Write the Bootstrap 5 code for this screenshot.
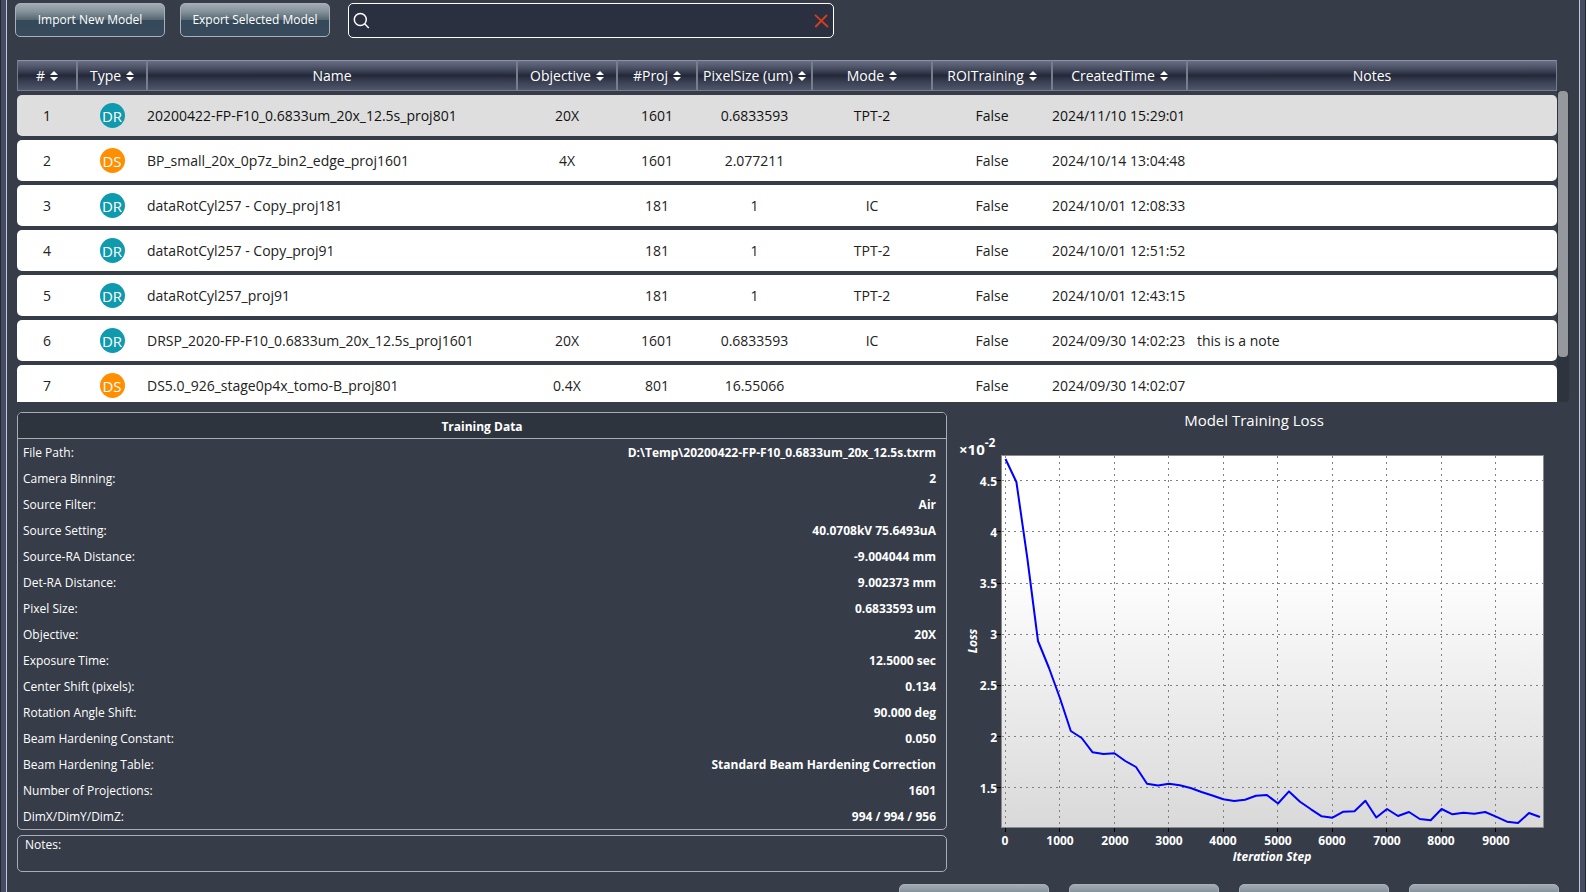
<!DOCTYPE html>
<html lang="en">
<head>
<meta charset="utf-8">
<meta name="viewport" content="width=device-width, initial-scale=1">
<title>Model Manager</title>
<link href="https://cdn.jsdelivr.net/npm/bootstrap@5.3.0/dist/css/bootstrap.min.css" rel="stylesheet">
<style>
  :root { --panel: #363c48; --line: #a9adb8; --dark: #2e343e; }
  body {
    background: #454b60; color: #fff; height: 100vh; overflow: hidden;
    border: solid #26282f; border-width: 0 1px;
    font-family: "Open Sans", "Noto Sans", sans-serif; font-size: 14px;
  }
  .dialog-panel { background: var(--panel); border: solid #c3c7d3; border-width: 0 1px; margin: 0 5px; padding: 3px 10px 0; min-height: 100vh; }

  .btn-glass {
    width: 150px; height: 34px; padding: 0; border: 1px solid #a7b0ba; border-radius: 5px; color: #fff; font-size: 12px;
    background: linear-gradient(#a3abb3 0, #82909a 25%, #55666f 50%, #34495a 51%, #384b5c 100%);
  }
  .btn-glass:hover { color: #fff; border-color: #fff; }
  .toolbar { margin-left: -2px; gap: 15px; }
  .search-field { width: 486px; height: 35px; margin-left: 3px; background: #2b3040; border: 1px solid #fff; border-radius: 5px; padding: 0 4px; }
  .search-field input { background: transparent; border: 0; outline: 0; color: #fff; min-width: 0; }

  .table-area { height: 346px; margin-top: 18px; }
  .table-clip { overflow: hidden; }
  .model-table { width: 100%; table-layout: fixed; border-collapse: separate; border-spacing: 0 4px; white-space: nowrap; }
  .model-table th {
    height: 31px; padding: 0; font-weight: 400; text-align: center; line-height: 20px;
    border: solid #777d8c; border-width: 1px; border-top-color: #8d92a2;
    background: linear-gradient(#696e82 0, #4a5063 25%, #24293a 50%, #3a4053 72%, #50576b 100%);
  }
  .model-table th svg { display: inline-block; margin: 0 0 2px 5px; }
  .model-table td { height: 41px; padding: 0; background: #fff; color: #222; text-align: center; line-height: 20px; }
  .model-table td:first-child { border-radius: 5px 0 0 5px; }
  .model-table td:last-child { border-radius: 0 5px 5px 0; padding-left: 10px; }
  .model-table td:nth-child(3), .model-table td:nth-child(9), .model-table td:last-child { text-align: left; }
  .model-table .selected td { background: #dedede; color: #111; }
  .c-num { width: 60px; } .c-type { width: 70px; } .c-obj { width: 100px; } .c-proj { width: 80px; }
  .c-pix { width: 115px; } .c-mode { width: 120px; } .c-time { width: 135px; }
  .kind { display: inline-flex; align-items: center; justify-content: center; width: 25px; height: 25px; border-radius: 50%; color: #fff; background: #109aad; vertical-align: middle; font-size: 15px; }
  .kind-ds { background: #ff8f00; }
  .scroll-track { width: 12px; margin-top: 35px; padding: 0 1px; background: var(--dark); border-radius: 0 0 4px 4px; }
  .scroll-thumb { height: 266px; background: #95989d; border-radius: 4px; }

  .lower { display: grid; grid-template-columns: minmax(0, 1fr) 622px; margin-top: 10px; }
  .data-box { border: 1px solid var(--line); border-radius: 5px; font-size: 12px; line-height: 28px; }
  .data-box h2 { font-size: 12px; font-weight: 700; line-height: 28px; height: 26px; background: var(--dark); border-bottom: 1px solid var(--line); border-radius: 4px 4px 0 0; }
  .data-box dl { padding: 0 10px 0 5px; }
  .data-box dl div { height: 26px; }
  .data-box dt { font-weight: 400; }
  .data-box dd { font-weight: 700; }
  .note-box { height: 37px; margin-top: 5px; padding: 0 7px; line-height: 17px; }
  .chart-title { font-size: 15px; font-weight: 400; line-height: 16px; margin-bottom: 6px; }
  .loss-chart { display: block; width: 100%; font-size: 12px; font-weight: 700; }
  .footer-bar { gap: 20px; padding: 12px 10px 0 0; }
</style>
</head>
<body>
<svg class="d-none">
  <symbol id="sort" viewBox="0 0 8 10"><path d="M4 0 8 4H0zM4 10 0 6h8z" fill="#fff"/></symbol>
</svg>
<main class="dialog-panel">
  <div class="toolbar d-flex align-items-start">
    <button type="button" class="btn btn-glass flex-shrink-0">Import New Model</button>
    <button type="button" class="btn btn-glass flex-shrink-0">Export Selected Model</button>
    <div class="search-field d-flex align-items-center">
      <svg width="17" height="17" viewBox="0 0 17 17" fill="none" stroke="#fff" stroke-width="1.5"><circle cx="7.3" cy="7.5" r="6"/><path d="m11.6 11.8 4.2 4.2"/></svg>
      <input type="text" class="flex-grow-1" aria-label="Search models">
      <button type="button" class="btn p-0 border-0 d-flex" aria-label="Clear search"><svg width="15" height="14" viewBox="0 0 15 14" fill="none" stroke="#d53f1d" stroke-width="1.8"><path d="M1 .8 14 13M13 1 1.300 13"/></svg></button>
    </div>
  </div>

  <div class="table-area d-flex">
    <div class="table-clip flex-grow-1">
      <table class="model-table">
        <colgroup><col class="c-num"><col class="c-type"><col><col class="c-obj"><col class="c-proj"><col class="c-pix"><col class="c-mode"><col class="c-mode"><col class="c-time"><col></colgroup>
        <thead>
          <tr>
            <th scope="col">#<svg width="8" height="10"><use href="#sort"/></svg></th>
            <th scope="col">Type<svg width="8" height="10"><use href="#sort"/></svg></th>
            <th scope="col">Name</th>
            <th scope="col">Objective<svg width="8" height="10"><use href="#sort"/></svg></th>
            <th scope="col">#Proj<svg width="8" height="10"><use href="#sort"/></svg></th>
            <th scope="col">PixelSize (um)<svg width="8" height="10"><use href="#sort"/></svg></th>
            <th scope="col">Mode<svg width="8" height="10"><use href="#sort"/></svg></th>
            <th scope="col">ROITraining<svg width="8" height="10"><use href="#sort"/></svg></th>
            <th scope="col">CreatedTime<svg width="8" height="10"><use href="#sort"/></svg></th>
            <th scope="col">Notes</th>
          </tr>
        </thead>
        <tbody>
          <tr class="selected"><td>1</td><td><span class="kind">DR</span></td><td>20200422-FP-F10_0.6833um_20x_12.5s_proj801</td><td>20X</td><td>1601</td><td>0.6833593</td><td>TPT-2</td><td>False</td><td>2024/11/10 15:29:01</td><td></td></tr>
          <tr><td>2</td><td><span class="kind kind-ds">DS</span></td><td>BP_small_20x_0p7z_bin2_edge_proj1601</td><td>4X</td><td>1601</td><td>2.077211</td><td></td><td>False</td><td>2024/10/14 13:04:48</td><td></td></tr>
          <tr><td>3</td><td><span class="kind">DR</span></td><td>dataRotCyl257 - Copy_proj181</td><td></td><td>181</td><td>1</td><td>IC</td><td>False</td><td>2024/10/01 12:08:33</td><td></td></tr>
          <tr><td>4</td><td><span class="kind">DR</span></td><td>dataRotCyl257 - Copy_proj91</td><td></td><td>181</td><td>1</td><td>TPT-2</td><td>False</td><td>2024/10/01 12:51:52</td><td></td></tr>
          <tr><td>5</td><td><span class="kind">DR</span></td><td>dataRotCyl257_proj91</td><td></td><td>181</td><td>1</td><td>TPT-2</td><td>False</td><td>2024/10/01 12:43:15</td><td></td></tr>
          <tr><td>6</td><td><span class="kind">DR</span></td><td>DRSP_2020-FP-F10_0.6833um_20x_12.5s_proj1601</td><td>20X</td><td>1601</td><td>0.6833593</td><td>IC</td><td>False</td><td>2024/09/30 14:02:23</td><td>this is a note</td></tr>
          <tr><td>7</td><td><span class="kind kind-ds">DS</span></td><td>DS5.0_926_stage0p4x_tomo-B_proj801</td><td>0.4X</td><td>801</td><td>16.55066</td><td></td><td>False</td><td>2024/09/30 14:02:07</td><td></td></tr>
        </tbody>
      </table>
    </div>
    <div class="scroll-track flex-shrink-0"><div class="scroll-thumb"></div></div>
  </div>

  <div class="lower">
    <div>
      <section class="data-box">
        <h2 class="m-0 text-center">Training Data</h2>
        <dl class="m-0">
          <div class="d-flex justify-content-between"><dt>File Path:</dt><dd class="m-0">D:\Temp\20200422-FP-F10_0.6833um_20x_12.5s.txrm</dd></div>
          <div class="d-flex justify-content-between"><dt>Camera Binning:</dt><dd class="m-0">2</dd></div>
          <div class="d-flex justify-content-between"><dt>Source Filter:</dt><dd class="m-0">Air</dd></div>
          <div class="d-flex justify-content-between"><dt>Source Setting:</dt><dd class="m-0">40.0708kV 75.6493uA</dd></div>
          <div class="d-flex justify-content-between"><dt>Source-RA Distance:</dt><dd class="m-0">-9.004044 mm</dd></div>
          <div class="d-flex justify-content-between"><dt>Det-RA Distance:</dt><dd class="m-0">9.002373 mm</dd></div>
          <div class="d-flex justify-content-between"><dt>Pixel Size:</dt><dd class="m-0">0.6833593 um</dd></div>
          <div class="d-flex justify-content-between"><dt>Objective:</dt><dd class="m-0">20X</dd></div>
          <div class="d-flex justify-content-between"><dt>Exposure Time:</dt><dd class="m-0">12.5000 sec</dd></div>
          <div class="d-flex justify-content-between"><dt>Center Shift (pixels):</dt><dd class="m-0">0.134</dd></div>
          <div class="d-flex justify-content-between"><dt>Rotation Angle Shift:</dt><dd class="m-0">90.000 deg</dd></div>
          <div class="d-flex justify-content-between"><dt>Beam Hardening Constant:</dt><dd class="m-0">0.050</dd></div>
          <div class="d-flex justify-content-between"><dt>Beam Hardening Table:</dt><dd class="m-0">Standard Beam Hardening Correction</dd></div>
          <div class="d-flex justify-content-between"><dt>Number of Projections:</dt><dd class="m-0">1601</dd></div>
          <div class="d-flex justify-content-between"><dt>DimX/DimY/DimZ:</dt><dd class="m-0">994 / 994 / 956</dd></div>
        </dl>
      </section>
      <section class="data-box note-box">Notes:</section>
    </div>

    <section class="pe-2">
      <h2 class="chart-title text-center">Model Training Loss</h2>
      <svg class="loss-chart" viewBox="947 434 614 437" role="img" aria-label="Training loss by iteration step">
        <defs><linearGradient id="plotFill" x1="0" y1="0" x2="0" y2="1"><stop offset=".3" stop-color="#fff"/><stop offset="1" stop-color="#d9d9d9"/></linearGradient></defs>
        <rect x="1001.500" y="455.500" width="542" height="372" fill="url(#plotFill)" stroke="#8a8a8a"/>
        <path fill="none" stroke="#808080" stroke-dasharray="2 4" d="M1002 480.500H1543M1002 531.500H1543M1002 583.500H1543M1002 634.500H1543M1002 685.500H1543M1002 736.500H1543M1002 787.500H1543M1005.500 456V827M1059.500 456V827M1114.500 456V827M1168.500 456V827M1223.500 456V827M1277.500 456V827M1332.500 456V827M1386.500 456V827M1441.500 456V827M1495.500 456V827"/>
        <path fill="none" stroke="#000" d="M997 480.500h4M997 531.500h4M997 583.500h4M997 634.500h4M997 685.500h4M997 736.500h4M997 787.500h4M1005.500 828v4M1059.500 828v4M1114.500 828v4M1168.500 828v4M1223.500 828v4M1277.500 828v4M1332.500 828v4M1386.500 828v4M1441.500 828v4M1495.500 828v4"/>
        <polyline fill="none" stroke="#00f" stroke-width="2" stroke-linejoin="round" points="1005.500,459 1016.400,482 1027.300,558 1038,641 1049,668 1059.900,698 1070.800,731 1081.700,738 1092.600,752.300 1103.500,754 1114.400,753.300 1125.300,761 1136,767 1147,783.700 1158,785.600 1168.900,783.800 1179.800,785.300 1190.600,788 1201.500,792 1212.400,795.500 1223.300,799.300 1234.200,801 1245,799.700 1256,795.700 1266.900,795 1278,803.500 1289,791.400 1300,801.700 1311,809.300 1321.700,816.300 1332.500,817.700 1343.400,811.700 1354.500,811.300 1365.400,800.700 1376.300,817.500 1387,809 1398,816 1409,812 1419.800,819 1430.700,820.300 1441.600,809 1452.500,814.300 1463.400,812.700 1474.300,813.700 1485.200,812 1496,816.700 1507,821.700 1518,823 1529,813 1540,817"/>
        <g fill="#fff" text-anchor="end">
          <text x="997" y="486">4.5</text><text x="997" y="537">4</text><text x="997" y="588">3.5</text><text x="997" y="639">3</text><text x="997" y="690">2.5</text><text x="997" y="742">2</text><text x="997" y="793">1.5</text>
        </g>
        <g fill="#fff" text-anchor="middle">
          <text x="1005" y="845">0</text><text x="1060" y="845">1000</text><text x="1115" y="845">2000</text><text x="1169" y="845">3000</text><text x="1223" y="845">4000</text><text x="1278" y="845">5000</text><text x="1332" y="845">6000</text><text x="1387" y="845">7000</text><text x="1441" y="845">8000</text><text x="1496" y="845">9000</text>
          <text x="1272" y="861" font-style="italic">Iteration Step</text>
          <text transform="translate(977 641) rotate(-90)" font-style="italic">Loss</text>
        </g>
        <text x="959" y="455" fill="#fff" font-size="15">×10<tspan dy="-8" font-size="12">-2</tspan></text>
      </svg>
    </section>
  </div>

  <div class="footer-bar d-flex justify-content-end">
    <button type="button" class="btn btn-glass" aria-label="Load"></button>
    <button type="button" class="btn btn-glass" aria-label="Edit"></button>
    <button type="button" class="btn btn-glass" aria-label="Delete"></button>
    <button type="button" class="btn btn-glass" aria-label="Close"></button>
  </div>
</main>
<script src="https://cdn.jsdelivr.net/npm/bootstrap@5.3.0/dist/js/bootstrap.bundle.min.js"></script>
</body>
</html>
